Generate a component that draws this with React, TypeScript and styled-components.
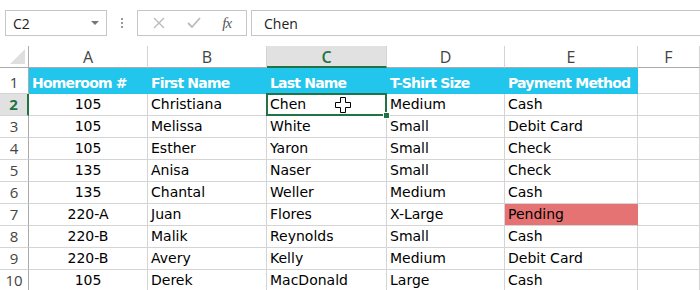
import React from 'react';
import styled, { createGlobalStyle, css } from 'styled-components';

interface IRow {
    room: string;
    first: string;
    last: string;
    size: string;
    payment: string;
    pending?: boolean;
}

const rows: IRow[] = [
    { room: '105', first: 'Christiana', last: 'Chen', size: 'Medium', payment: 'Cash' },
    { room: '105', first: 'Melissa', last: 'White', size: 'Small', payment: 'Debit Card' },
    { room: '105', first: 'Esther', last: 'Yaron', size: 'Small', payment: 'Check' },
    { room: '135', first: 'Anisa', last: 'Naser', size: 'Small', payment: 'Check' },
    { room: '135', first: 'Chantal', last: 'Weller', size: 'Medium', payment: 'Cash' },
    { room: '220-A', first: 'Juan', last: 'Flores', size: 'X-Large', payment: 'Pending', pending: true },
    { room: '220-B', first: 'Malik', last: 'Reynolds', size: 'Small', payment: 'Cash' },
    { room: '220-B', first: 'Avery', last: 'Kelly', size: 'Medium', payment: 'Debit Card' },
    { room: '105', first: 'Derek', last: 'MacDonald', size: 'Large', payment: 'Cash' },
];

const columns = ['A', 'B', 'C', 'D', 'E', 'F'];
const headings = ['Homeroom #', 'First Name', 'Last Name', 'T-Shirt Size', 'Payment Method'];

const GlobalStyle = createGlobalStyle`
    body {
        margin: 0;
        background: #fff;
        font-family: "Open Sans", "Noto Sans", sans-serif;
        overflow: hidden;
    }
`;

const StyledPage = styled.div`
    width: 700px;
    height: 290px;
    overflow: hidden;
`;

const FormulaBar = styled.div`
    display: flex;
    align-items: stretch;
    height: 26px;
    padding: 10px 0 0 5px;
    margin-bottom: 10px;
`;

const NameBox = styled.div`
    box-sizing: border-box;
    width: 102px;
    border: 1px solid #c6c6c6;
    display: flex;
    align-items: center;
    justify-content: space-between;
    padding: 0 7px 0 7px;
    font-size: 14px;
    color: #222;
`;

const DropArrow = styled.span`
    width: 0;
    height: 0;
    border-left: 4px solid transparent;
    border-right: 4px solid transparent;
    border-top: 4px solid #777;
`;

const Dots = styled.div`
    width: 30px;
    display: flex;
    flex-direction: column;
    align-items: center;
    justify-content: center;
    gap: 2px;
    span {
        width: 2px;
        height: 2px;
        background: #999;
    }
`;

const ButtonBox = styled.div`
    box-sizing: border-box;
    width: 110px;
    border: 1px solid #c6c6c6;
    display: flex;
    align-items: center;
    justify-content: space-around;
    padding: 0 4px;
`;

const FxLabel = styled.span`
    font-family: "Liberation Serif", serif;
    font-style: italic;
    font-size: 15px;
    color: #555;
    letter-spacing: -1px;
`;

const FormulaInput = styled.div`
    flex: 1;
    margin-left: 4px;
    margin-right: -2px;
    border: 1px solid #c6c6c6;
    display: flex;
    align-items: center;
    padding-left: 12px;
    font-size: 14px;
    color: #222;
`;

const Sheet = styled.div`
    display: grid;
    grid-template-columns: 29px 119px 119px 120px 118px 133px 1fr;
    grid-template-rows: 22px 26px repeat(9, 22px);
`;

const Corner = styled.div`
    box-sizing: border-box;
    border-right: 1px solid #ababab;
    border-bottom: 1px solid #ababab;
    display: flex;
    align-items: flex-end;
    justify-content: flex-end;
    padding: 0 3px 3px 0;
`;

const Triangle = styled.span`
    width: 0;
    height: 0;
    border-left: 15px solid transparent;
    border-bottom: 15px solid #dfdfdf;
`;

const ColHeader = styled.div<{ $active?: boolean }>`
    box-sizing: border-box;
    border-right: 1px solid #d4d4d4;
    border-bottom: 1px solid #ababab;
    display: flex;
    align-items: center;
    justify-content: center;
    font-size: 16px;
    color: #444;
    padding-top: 1px;
    ${(p) => p.$active && css`
        background: #e1e1e1;
        color: #217346;
        font-weight: 600;
        border-bottom: 2px solid #217346;
    `}
`;

const RowHeader = styled.div<{ $active?: boolean }>`
    box-sizing: border-box;
    border-right: 1px solid #ababab;
    border-bottom: 1px solid #d4d4d4;
    display: flex;
    align-items: flex-end;
    justify-content: center;
    padding-bottom: 1px;
    font-size: 15px;
    line-height: 20px;
    color: #444;
    ${(p) => p.$active && css`
        background: #e1e1e1;
        color: #217346;
        font-weight: 700;
        border-right: 2px solid #217346;
    `}
`;

const Cell = styled.div<{ $center?: boolean; $fill?: string; $selected?: boolean }>`
    position: relative;
    box-sizing: border-box;
    border-right: 1px solid #d4d4d4;
    border-bottom: 1px solid #d4d4d4;
    display: flex;
    align-items: flex-end;
    justify-content: ${(p) => (p.$center ? 'center' : 'flex-start')};
    padding: 0 3px 2px;
    font-family: "DejaVu Sans", sans-serif;
    font-size: 14px;
    line-height: 18px;
    color: #000;
    white-space: nowrap;
    ${(p) => p.$fill && css`
        background: ${p.$fill};
        border-right-color: ${p.$fill};
    `}
    ${(p) => p.$selected && css`
        &::after {
            content: '';
            position: absolute;
            left: -1px;
            top: -1px;
            right: -1px;
            bottom: -1px;
            border: 2px solid #217346;
        }
    `}
`;

const HeadCell = styled(Cell)`
    background: #22c5ec;
    border-right-color: #22c5ec;
    border-bottom-color: #22c5ec;
    color: #fff;
    font-weight: 700;
    letter-spacing: -0.8px;
    padding-bottom: 1px;
`;

const FillHandle = styled.span`
    position: absolute;
    right: -4px;
    bottom: -4px;
    width: 5px;
    height: 5px;
    background: #217346;
    border: 1px solid #fff;
    z-index: 2;
`;

const Cursor = styled.svg`
    position: absolute;
    left: 68px;
    top: 3px;
    z-index: 3;
`;

const App = () => {
    return (
        <StyledPage>
            <GlobalStyle />
            <FormulaBar>
                <NameBox>C2<DropArrow /></NameBox>
                <Dots><span /><span /><span /></Dots>
                <ButtonBox>
                    <svg width="12" height="12" viewBox="0 0 12 12">
                        <path d="M1 1 L11 11 M11 1 L1 11" stroke="#bbb" strokeWidth="1.4" />
                    </svg>
                    <svg width="14" height="12" viewBox="0 0 14 12">
                        <path d="M1 6 L5 10 L13 1" stroke="#bbb" strokeWidth="1.8" fill="none" />
                    </svg>
                    <FxLabel>fx</FxLabel>
                </ButtonBox>
                <FormulaInput>Chen</FormulaInput>
            </FormulaBar>
            <Sheet>
                <Corner><Triangle /></Corner>
                {columns.map((c) => (
                    <ColHeader key={c} $active={c === 'C'}>{c}</ColHeader>
                ))}

                <RowHeader>1</RowHeader>
                {headings.map((h) => (
                    <HeadCell key={h}>{h}</HeadCell>
                ))}
                <Cell />

                {rows.map((each, i) => (
                    <React.Fragment key={i}>
                        <RowHeader $active={i === 0}>{i + 2}</RowHeader>
                        <Cell $center>{each.room}</Cell>
                        <Cell>{each.first}</Cell>
                        <Cell $selected={i === 0}>
                            {each.last}
                            {i === 0 && (
                                <>
                                    <FillHandle />
                                    <Cursor width="16" height="16" viewBox="0 0 16 16">
                                        <path
                                            d="M5.5 0.5 H10.5 V5.5 H15.5 V10.5 H10.5 V15.5 H5.5 V10.5 H0.5 V5.5 H5.5 Z"
                                            fill="#fff"
                                            stroke="#000"
                                            strokeWidth="1"
                                            strokeLinejoin="round"
                                        />
                                    </Cursor>
                                </>
                            )}
                        </Cell>
                        <Cell>{each.size}</Cell>
                        <Cell $fill={each.pending ? '#e67373' : undefined}>{each.payment}</Cell>
                        <Cell />
                    </React.Fragment>
                ))}
            </Sheet>
        </StyledPage>
    );
};

export default App;
